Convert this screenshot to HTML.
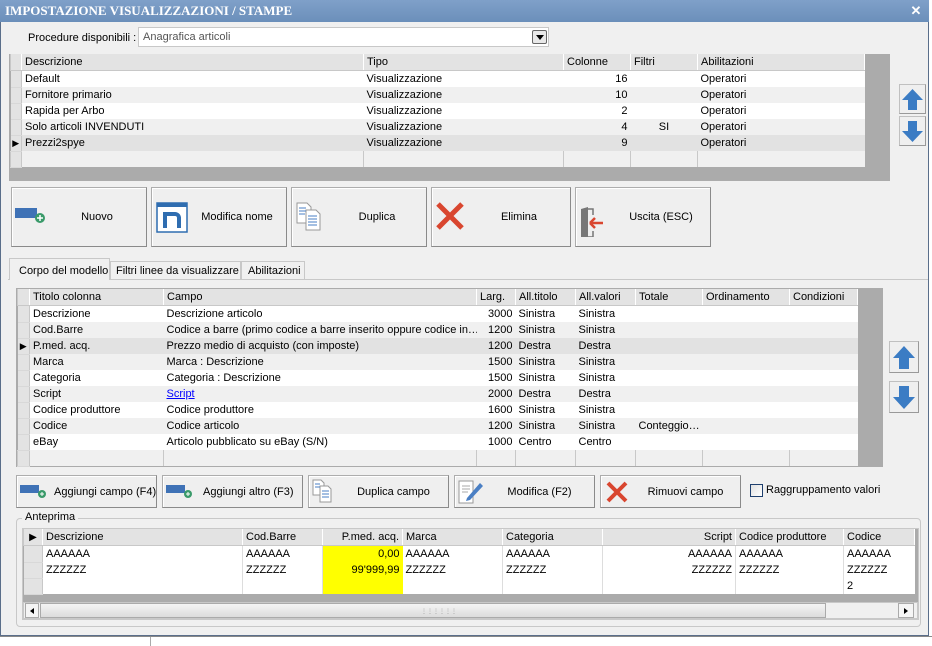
<!DOCTYPE html>
<html><head><meta charset="utf-8"><style>
*{box-sizing:border-box;margin:0;padding:0}
body{width:932px;height:646px;background:#fff;font-family:"Liberation Sans",sans-serif;font-size:11px;color:#000;position:relative;overflow:hidden}
.a{position:absolute;white-space:nowrap}
#win{left:0;top:0;width:929px;height:636px;background:#f0f0f0;border:1px solid #5a6e8a;border-top:none}
#title{left:0;top:0;width:929px;height:22px;background:linear-gradient(#7fa0c9,#6b8fba);color:#fff;font-family:"Liberation Serif",serif;font-weight:bold;font-size:13px;line-height:22px;padding-left:5px}
table{border-collapse:collapse;table-layout:fixed;position:absolute}
td{height:16px;padding:1px 3px 0;white-space:nowrap;overflow:hidden;line-height:15px;border:0}
tr.h td{background:#e3e3e3;border-right:1px solid #fff;border-left:1px solid #c8c8c8;border-bottom:1px solid #c8c8c8}
tr.w td{background:#fff}
tr.g td{background:#f0f0f0}
tr.s td{background:#e2e2e2}
tr.e td{background:#f0f0f0;border-left:1px solid #c8c8c8}
td.i{background:#e3e3e3!important;border-right:1px solid #c8c8c8;border-bottom:1px solid #d8d8d8;padding:0;font-size:9px;text-align:center}
.r{text-align:right}.c{text-align:center}
.btn{position:absolute;background:#efefef;border:1px solid #adadad;border-right-color:#8a8a8a;border-bottom-color:#8a8a8a;box-shadow:inset 1px 1px 0 #fff;font-size:11px;display:flex;align-items:center;white-space:nowrap}
.btn span{position:absolute;left:0;right:0;text-align:center}
.arr{position:absolute;width:27px;height:30px;background:#efefef;border:1px solid #c0c0c0;border-right-color:#999;border-bottom-color:#999}
</style></head><body>
<div class="a" style="left:929px;top:0;width:3px;height:646px;background:#fff"></div>
<div class="a" style="left:0;top:636px;width:932px;height:10px;background:#fff;border-top:1px solid #888"></div>
<div class="a" style="left:150px;top:637px;width:1px;height:9px;background:#aaa"></div>
<div id="win" class="a"></div>
<div id="title" class="a">IMPOSTAZIONE VISUALIZZAZIONI / STAMPE</div>
<div class="a" style="left:910px;top:5px;width:12px;height:12px;color:#fff;font-weight:bold;font-size:13px;line-height:12px;text-align:center">✕</div>

<div class="a" style="left:28px;top:32px;font-size:11px">Procedure disponibili :</div>
<div class="a" style="left:138px;top:27px;width:411px;height:20px;background:#fff;border:1px solid #c8c8c8;color:#555;padding:3px 4px;font-size:11px">Anagrafica articoli</div>
<div class="a" style="left:532px;top:30px;width:15px;height:14px;border:1px solid #666;border-radius:2px;background:#e8e8e8"><div class="a" style="left:3px;top:4px;border-left:4px solid transparent;border-right:4px solid transparent;border-top:5px solid #000"></div></div>

<!-- grid 1 -->
<div class="a" style="left:9px;top:54px;width:881px;height:127px;background:#ababab"></div>
<table style="left:10px;top:54px;width:854px">
<colgroup><col style="width:11px"><col style="width:342px"><col style="width:200px"><col style="width:67px"><col style="width:67px"><col style="width:167px"></colgroup>
<tr class="h"><td class="i"></td><td>Descrizione</td><td>Tipo</td><td>Colonne</td><td>Filtri</td><td>Abilitazioni</td></tr>
<tr class="w"><td class="i"></td><td>Default</td><td>Visualizzazione</td><td class="r">16</td><td></td><td>Operatori</td></tr>
<tr class="g"><td class="i"></td><td>Fornitore primario</td><td>Visualizzazione</td><td class="r">10</td><td></td><td>Operatori</td></tr>
<tr class="w"><td class="i"></td><td>Rapida per Arbo</td><td>Visualizzazione</td><td class="r">2</td><td></td><td>Operatori</td></tr>
<tr class="g"><td class="i"></td><td>Solo articoli INVENDUTI</td><td>Visualizzazione</td><td class="r">4</td><td class="c">SI</td><td>Operatori</td></tr>
<tr class="s"><td class="i">▶</td><td>Prezzi2spye</td><td>Visualizzazione</td><td class="r">9</td><td></td><td>Operatori</td></tr>
<tr class="e"><td class="i"></td><td></td><td></td><td></td><td></td><td></td></tr>
</table>

<div class="arr" style="left:899px;top:84px"><svg width="25" height="28"><path d="M12.5 4 L23 15 H17 V25 H8 V15 H2 Z" fill="#3b7cc4"/></svg></div>
<div class="arr" style="left:899px;top:116px"><svg width="25" height="28"><path d="M12.5 25 L23 14 H17 V4 H8 V14 H2 Z" fill="#3b7cc4"/></svg></div>

<!-- buttons row 1 -->
<div class="btn" style="left:11px;top:187px;width:136px;height:60px"><svg class="a" style="left:3px;top:16px" width="32" height="22"><rect x="0" y="4" width="22" height="10" fill="#3f72b6"/><circle cx="25" cy="14" r="5" fill="#3a9a6a"/><path d="M25 11v6M22 14h6" stroke="#fff" stroke-width="1.5"/></svg><span style="left:36px">Nuovo</span></div>
<div class="btn" style="left:151px;top:187px;width:136px;height:60px"><svg class="a" style="left:4px;top:14px" width="32" height="32"><rect x="1" y="1" width="30" height="29" fill="#fff" stroke="#2f6db0" stroke-width="1.5"/><rect x="1" y="1" width="30" height="4" fill="#2f6db0"/><path d="M9 26V12h10a4 4 0 0 1 4 4v10" fill="none" stroke="#2f6db0" stroke-width="4"/></svg><span style="left:36px">Modifica nome</span></div>
<div class="btn" style="left:291px;top:187px;width:136px;height:60px"><svg class="a" style="left:4px;top:14px" width="30" height="30"><path d="M1 1h10l4 4v16H1z" fill="#fff" stroke="#999"/><path d="M10 8h10l4 4v16H10z" fill="#fff" stroke="#999"/><path d="M3 6h7M3 9h7M3 12h6M12 14h9M12 17h9M12 20h9M12 23h9" stroke="#4a7fc4"/></svg><span style="left:36px">Duplica</span></div>
<div class="btn" style="left:431px;top:187px;width:140px;height:60px"><svg class="a" style="left:2px;top:12px" width="32" height="32"><path d="M4 4L28 28M28 4L4 28" stroke="#d9462f" stroke-width="5"/></svg><span style="left:36px">Elimina</span></div>
<div class="btn" style="left:575px;top:187px;width:136px;height:60px"><svg class="a" style="left:3px;top:19px" width="30" height="30"><path d="M2 2L9 0V32L2 30Z" fill="#777"/><path d="M9 2H14V8M14 24V30H9" fill="none" stroke="#777" stroke-width="1.5"/><path d="M11 16H24M11 16l5-5M11 16l5 5" stroke="#d9462f" stroke-width="2.5" fill="none"/></svg><span style="left:36px">Uscita (ESC)</span></div>

<!-- tabs -->
<div class="a" style="left:8px;top:279px;width:920px;height:1px;background:#c8c8c8"></div>
<div class="a" style="left:9px;top:258px;width:101px;height:22px;background:#f0f0f0;border:1px solid #c8c8c8;border-bottom:none;padding:6px 0 0 9px;font-size:11px">Corpo del modello</div>
<div class="a" style="left:110px;top:261px;width:131px;height:18px;border:1px solid #c8c8c8;border-bottom:none;padding:3px 0 0 5px;font-size:11px">Filtri linee da visualizzare</div>
<div class="a" style="left:241px;top:261px;width:64px;height:18px;border:1px solid #c8c8c8;border-bottom:none;padding:3px 0 0 6px;font-size:11px">Abilitazioni</div>

<!-- grid 2 -->
<div class="a" style="left:16px;top:288px;width:867px;height:179px;background:#ababab"></div>
<table style="left:17px;top:289px;width:840px">
<colgroup><col style="width:12px"><col style="width:134px"><col style="width:313px"><col style="width:39px"><col style="width:60px"><col style="width:60px"><col style="width:67px"><col style="width:87px"><col style="width:68px"></colgroup>
<tr class="h"><td class="i"></td><td>Titolo colonna</td><td>Campo</td><td>Larg.</td><td>All.titolo</td><td>All.valori</td><td>Totale</td><td>Ordinamento</td><td>Condizioni</td></tr>
<tr class="w"><td class="i"></td><td>Descrizione</td><td>Descrizione articolo</td><td class="r">3000</td><td>Sinistra</td><td>Sinistra</td><td></td><td></td><td></td></tr>
<tr class="g"><td class="i"></td><td>Cod.Barre</td><td>Codice a barre (primo codice a barre inserito oppure codice in…</td><td class="r">1200</td><td>Sinistra</td><td>Sinistra</td><td></td><td></td><td></td></tr>
<tr class="s"><td class="i">▶</td><td>P.med. acq.</td><td>Prezzo medio di acquisto (con imposte)</td><td class="r">1200</td><td>Destra</td><td>Destra</td><td></td><td></td><td></td></tr>
<tr class="g"><td class="i"></td><td>Marca</td><td>Marca : Descrizione</td><td class="r">1500</td><td>Sinistra</td><td>Sinistra</td><td></td><td></td><td></td></tr>
<tr class="w"><td class="i"></td><td>Categoria</td><td>Categoria : Descrizione</td><td class="r">1500</td><td>Sinistra</td><td>Sinistra</td><td></td><td></td><td></td></tr>
<tr class="g"><td class="i"></td><td>Script</td><td><u style="color:#00f">Script</u></td><td class="r">2000</td><td>Destra</td><td>Destra</td><td></td><td></td><td></td></tr>
<tr class="w"><td class="i"></td><td>Codice produttore</td><td>Codice produttore</td><td class="r">1600</td><td>Sinistra</td><td>Sinistra</td><td></td><td></td><td></td></tr>
<tr class="g"><td class="i"></td><td>Codice</td><td>Codice articolo</td><td class="r">1200</td><td>Sinistra</td><td>Sinistra</td><td>Conteggio…</td><td></td><td></td></tr>
<tr class="w"><td class="i"></td><td>eBay</td><td>Articolo pubblicato su eBay (S/N)</td><td class="r">1000</td><td>Centro</td><td>Centro</td><td></td><td></td><td></td></tr>
<tr class="e"><td class="i"></td><td></td><td></td><td></td><td></td><td></td><td></td><td></td><td></td></tr>
</table>

<div class="arr" style="left:889px;top:341px;width:30px;height:32px"><svg width="28" height="30"><path d="M14 4 L25 16 H19 V27 H9 V16 H3 Z" fill="#3b7cc4"/></svg></div>
<div class="arr" style="left:889px;top:381px;width:30px;height:32px"><svg width="28" height="30"><path d="M14 27 L25 15 H19 V4 H9 V15 H3 Z" fill="#3b7cc4"/></svg></div>

<!-- buttons row 2 -->
<div class="btn" style="left:16px;top:475px;width:141px;height:33px"><svg class="a" style="left:3px;top:7px" width="28" height="16"><rect x="0" y="2" width="19" height="8" fill="#3f72b6"/><circle cx="22" cy="11" r="4" fill="#3a9a6a"/><path d="M22 9v4M20 11h4" stroke="#fff"/></svg><span style="left:37px;text-align:left">Aggiungi campo (F4)</span></div>
<div class="btn" style="left:162px;top:475px;width:141px;height:33px"><svg class="a" style="left:3px;top:7px" width="28" height="16"><rect x="0" y="2" width="19" height="8" fill="#3f72b6"/><circle cx="22" cy="11" r="4" fill="#3a9a6a"/><path d="M22 9v4M20 11h4" stroke="#fff"/></svg><span style="left:40px;text-align:left">Aggiungi altro (F3)</span></div>
<div class="btn" style="left:308px;top:475px;width:141px;height:33px"><svg class="a" style="left:3px;top:3px" width="24" height="26"><path d="M1 1h8l3 3v12H1z" fill="#fff" stroke="#999"/><path d="M8 7h8l3 3v13H8z" fill="#fff" stroke="#999"/><path d="M3 5h5M3 8h5M10 12h7M10 15h7M10 18h7" stroke="#4a7fc4"/></svg><span style="left:30px">Duplica campo</span></div>
<div class="btn" style="left:454px;top:475px;width:141px;height:33px"><svg class="a" style="left:3px;top:3px" width="26" height="26"><path d="M1 2h14v22H1z" fill="#fff" stroke="#999"/><path d="M4 7h8M4 10h8M4 13h6" stroke="#aaa"/><path d="M9 19L22 4l3 3L12 21l-4 1z" fill="#4a7fc4"/></svg><span style="left:30px">Modifica (F2)</span></div>
<div class="btn" style="left:600px;top:475px;width:141px;height:33px"><svg class="a" style="left:4px;top:4px" width="24" height="24"><path d="M3 3L21 21M21 3L3 21" stroke="#d9462f" stroke-width="4"/></svg><span style="left:30px">Rimuovi campo</span></div>
<div class="a" style="left:750px;top:484px;width:13px;height:13px;border:1px solid #1e3f6e;background:linear-gradient(135deg,#e0e0e0,#fff)"></div>
<div class="a" style="left:766px;top:484px;font-size:11px">Raggruppamento valori</div>

<!-- anteprima -->
<div class="a" style="left:16px;top:518px;width:905px;height:109px;border:1px solid #c8c8c8;border-radius:4px"></div>
<div class="a" style="left:22px;top:511px;background:#f0f0f0;padding:0 3px;font-size:11px">Anteprima</div>
<div class="a" style="left:22px;top:528px;width:897px;height:92px;background:#ababab;border:1px solid #c8c8c8"></div>
<table style="left:23px;top:529px;width:891px">
<colgroup><col style="width:19px"><col style="width:200px"><col style="width:80px"><col style="width:80px"><col style="width:100px"><col style="width:100px"><col style="width:133px"><col style="width:108px"><col style="width:71px"></colgroup>
<tr class="h"><td class="i" style="font-size:10px">▶</td><td>Descrizione</td><td>Cod.Barre</td><td class="r">P.med. acq.</td><td>Marca</td><td>Categoria</td><td class="r">Script</td><td>Codice produttore</td><td>Codice</td></tr>
<tr class="w"><td class="i"></td><td style="border-right:1px solid #ddd">AAAAAA</td><td style="border-right:1px solid #ddd">AAAAAA</td><td class="r" style="background:#ff0">0,00</td><td style="border-right:1px solid #ddd">AAAAAA</td><td style="border-right:1px solid #ddd">AAAAAA</td><td class="r" style="border-right:1px solid #ddd">AAAAAA</td><td style="border-right:1px solid #ddd">AAAAAA</td><td>AAAAAA</td></tr>
<tr class="w"><td class="i"></td><td style="border-right:1px solid #ddd">ZZZZZZ</td><td style="border-right:1px solid #ddd">ZZZZZZ</td><td class="r" style="background:#ff0">99'999,99</td><td style="border-right:1px solid #ddd">ZZZZZZ</td><td style="border-right:1px solid #ddd">ZZZZZZ</td><td class="r" style="border-right:1px solid #ddd">ZZZZZZ</td><td style="border-right:1px solid #ddd">ZZZZZZ</td><td>ZZZZZZ</td></tr>
<tr class="w"><td class="i"></td><td style="border-right:1px solid #ddd"></td><td style="border-right:1px solid #ddd"></td><td style="background:#ff0"></td><td style="border-right:1px solid #ddd"></td><td style="border-right:1px solid #ddd"></td><td style="border-right:1px solid #ddd"></td><td style="border-right:1px solid #ddd"></td><td>2</td></tr>
</table>
<!-- scrollbar -->
<div class="a" style="left:23px;top:602px;width:895px;height:17px;background:#f0f0f0;border:1px solid #c8c8c8"></div>
<div class="a" style="left:25px;top:603px;width:14px;height:15px;border:1px solid #aaa;background:#f5f5f5"><div class="a" style="left:4px;top:4px;border-top:3px solid transparent;border-bottom:3px solid transparent;border-right:4px solid #000"></div></div>
<div class="a" style="left:40px;top:603px;width:786px;height:15px;border:1px solid #aaa;background:linear-gradient(#f4f4f4,#dcdcdc)"><div class="a" style="left:380px;top:4px;font-size:6px;color:#999">⋮⋮⋮⋮⋮⋮</div></div>
<div class="a" style="left:898px;top:603px;width:16px;height:15px;border:1px solid #aaa;background:#f5f5f5"><div class="a" style="left:5px;top:4px;border-top:3px solid transparent;border-bottom:3px solid transparent;border-left:4px solid #000"></div></div>
</body></html>
